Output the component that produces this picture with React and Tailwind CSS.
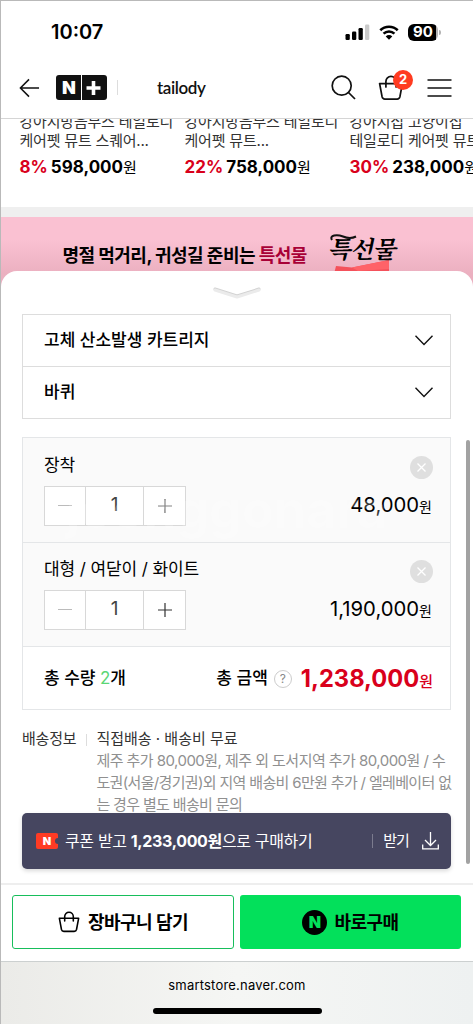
const products = [
  { name: ["강아지방음부스 테일로디", "케어펫 뮤트 스퀘어..."], rate: "8%", price: "598,000" },
  { name: ["강아지방음부스 테일로디", "케어펫 뮤트..."], rate: "22%", price: "758,000" },
  { name: ["강아지집 고양이집", "테일로디 케어펫 뮤트"], rate: "30%", price: "238,000" },
]

const options = ["고체 산소발생 카트리지", "바퀴"]

const items = [
  { name: "장착", count: 1, price: "48,000" },
  { name: "대형 / 여닫이 / 화이트", count: 1, price: "1,190,000" },
]

function StatusBar() {
  return (
    <div className="flex h-[57px] shrink-0 items-center justify-between pt-[5px] pr-[32px] pl-[50px]">
      <span className="text-[20px] leading-6 font-semibold">10:07</span>
      <div className="flex items-center">
        <svg width="25" height="16" viewBox="0 0 25 16">
          <rect x="0.5" y="10" width="4.3" height="6" rx="1.2" />
          <rect x="7" y="7.5" width="4.3" height="8.5" rx="1.2" />
          <rect x="13.5" y="4" width="4.3" height="12" rx="1.2" />
          <rect x="20" y="0.5" width="4.3" height="15.5" rx="1.2" fill="#cacaca" />
        </svg>
        <svg className="ml-[9px]" width="20" height="15" viewBox="0 0 21 16" fill="none" stroke="#000" strokeWidth="2.7">
          <path d="M1.2 5.6a13.2 13.2 0 0 1 18.6 0" />
          <path d="M4.7 9.3a8.3 8.3 0 0 1 11.6 0" />
          <path d="M7 12.2a5 5 0 0 1 7 0L10.500 15.700Z" fill="#000" stroke="none" />
        </svg>
        <div className="ml-[9px] flex h-[17px] w-[30px] items-center justify-center rounded-[6px] bg-linear-to-r from-black from-93% to-[#b3b3b3] to-93% text-[15px] font-bold text-white">
          90
        </div>
        <span className="ml-px h-[5px] w-[2px] rounded-r-full bg-[#b3b3b3]" />
      </div>
    </div>
  )
}

function Bag({ size, strokeWidth }) {
  return (
    <svg width={size} height={size} viewBox="0 0 24 24" fill="none" stroke="currentColor" strokeWidth={strokeWidth} strokeLinejoin="round" strokeLinecap="round">
      <path d="M1.500 8h21l-2.300 12.200a2.600 2.600 0 0 1-2.500 2H6.300a2.600 2.600 0 0 1-2.500-2Z" />
      <path d="M7.300 11V6a4.700 4.700 0 0 1 9.400 0v5" />
    </svg>
  )
}

function Header() {
  return (
    <header className="flex h-[61px] shrink-0 items-center border-b border-[#d5d5d5] pr-[21px] pb-px pl-[18px]">
      <svg width="21" height="20" viewBox="0 0 22 20" fill="none" stroke="#111" strokeWidth="1.6">
        <path d="M10.500 1 1.500 10l9 9M1.500 10H21" />
      </svg>
      <div className="ml-[16px] flex h-[25px] w-[51px] overflow-hidden rounded-[3px] bg-[#111] text-white">
        <span className="flex w-[26px] items-center justify-center border-r border-white pl-px text-[18px] font-black">N</span>
        <svg className="ml-[4px] mt-[6px]" width="15" height="14" viewBox="0 0 15 14" fill="none" stroke="#fff" strokeWidth="3.6">
          <path d="M0.500 7h14M7.500 0v14" />
        </svg>
      </div>
      <span className="ml-[10px] h-[15px] w-px bg-[#ddd]" />
      <span className="ml-[39px] font-['Lato'] text-[17px] leading-6 font-semibold tracking-[-0.4px] text-[#111]">tailody</span>
      <div className="ml-auto flex items-center text-[#111]">
        <svg width="25" height="25" viewBox="0 0 25 25" fill="none" stroke="currentColor" strokeWidth="1.7">
          <circle cx="10.700" cy="10.700" r="9.500" />
          <path d="m17.500 17.500 6.500 6.500" />
        </svg>
        <div className="relative ml-[22px]">
          <Bag size={26} strokeWidth={1.6} />
          <span className="absolute -top-[5px] left-[15px] flex size-5 items-center justify-center rounded-full bg-[#ff3b20] text-[13px] font-bold text-white">2</span>
        </div>
        <svg className="ml-[23px]" width="25" height="18" viewBox="0 0 25 18" stroke="currentColor" strokeWidth="1.6">
          <path d="M0.500 1h24M0.500 9h24M0.500 17h24" />
        </svg>
      </div>
    </header>
  )
}

function ProductList() {
  return (
    <div className="flex h-[88px] shrink-0 overflow-hidden pl-[18.500px]">
      {products.map((p) => (
        <div key={p.price} className="-mt-[7px] w-[165px] shrink-0 whitespace-nowrap">
          <p className="text-[15px] leading-[19px] tracking-[-0.2px] text-[#333]">
            {p.name[0]}
            <br />
            {p.name[1]}
          </p>
          <p className="mt-[5px] text-[17px] leading-6 font-bold">
            <span className="text-[#d9001b]">{p.rate}</span>
            <span className="ml-[3px]">{p.price}</span>
            <span className="text-[15px] font-normal">원</span>
          </p>
        </div>
      ))}
    </div>
  )
}

function Banner() {
  return (
    <div className="flex h-[76px] shrink-0 bg-linear-to-b from-[#fac1d2] from-30% to-[#ebb0c0] to-75% pt-[27px] pl-[61.500px]">
      <p className="text-[18px] leading-6 font-bold tracking-[-0.53px] whitespace-nowrap">
        명절 먹거리, 귀성길 준비는 <span className="text-[#a80036]">특선물</span>
      </p>
      <div className="relative -mt-[10px] ml-[23px] h-[60px] w-[70px]">
        <svg className="absolute top-[26px] left-[4px]" width="56" height="14" viewBox="0 0 56 14">
          <path d="M2 6 18 7.500 55 0v14H0Z" fill="#f4515b" />
          <path d="m18 7.500 37-7.500v9L24 11Z" fill="#ff6268" />
        </svg>
        <span className="absolute -top-px left-0 -skew-x-12 font-['Noto_Serif_CJK_KR','Noto_Sans_CJK_KR',serif] text-[24px] leading-[30px] font-bold tracking-[-0.8px] whitespace-nowrap">
          특선물
        </span>
        <svg className="absolute top-0 left-0" width="30" height="9" viewBox="0 0 30 9" fill="none" stroke="#111" strokeWidth="2">
          <path d="M2 6C-1 1 7 0 13 2.500s9 2 13 0" />
        </svg>
      </div>
    </div>
  )
}

function OptionSelect({ label }) {
  return (
    <button className="flex h-[52px] w-full items-center justify-between border-b border-[#ddd] pr-[17px] pl-[21px] text-[17px] font-medium last:h-[51px] last:border-b-0">
      {label}
      <svg width="18" height="11" viewBox="0 0 18 11" fill="none" stroke="#111" strokeWidth="1.4">
        <path d="m0.500 0.800 8.500 8.700 8.500-8.700" />
      </svg>
    </button>
  )
}

function Counter({ count, faded }) {
  return (
    <div className="flex h-10 w-[142px] border border-[#d8d8d8] bg-white">
      <span className="flex w-[41px] items-center justify-center border-r border-[#d8d8d8]">
        <span className="h-px w-[14px] bg-[#bbb]" />
      </span>
      <span className="flex flex-1 items-center justify-center text-[19px] text-[#444]">{count}</span>
      <span className="flex w-[42px] items-center justify-center border-l border-[#d8d8d8]">
        <svg width="14" height="14" viewBox="0 0 14 14" stroke={faded ? "#666" : "#333"} strokeWidth="1.2">
          <path d="M0 7h14M7 0v14" />
        </svg>
      </span>
    </div>
  )
}

function CartItem({ item, faded }) {
  return (
    <div className="h-[104px] border-b border-[#e4e6e8] bg-[#fafafa] pt-[14px] pr-[17px] pl-[21px] first:h-[105px] first:pt-[15px]">
      <div className="flex h-[26px] justify-between">
        <span className="text-[17px] leading-[25px] tracking-[-0.1px]">{item.name}</span>
        <span className="mt-[3px] flex size-[23px] items-center justify-center rounded-full bg-[#dfdfdf]">
          <svg width="9" height="9" viewBox="0 0 9 9" stroke="#fff" strokeWidth="1.3">
            <path d="m0.500 0.500 8 8M8.500 0.500l-8 8" />
          </svg>
        </span>
      </div>
      <div className="mt-[5px] flex items-center justify-between pr-px">
        <Counter count={item.count} faded={faded} />
        <span className="text-[20.300px] leading-[41px]">
          {item.price}
          <span className="text-[14px]">원</span>
        </span>
      </div>
    </div>
  )
}

function Cart() {
  return (
    <div className="relative mt-[18px] h-[273px] border border-[#e4e6e8]">
      {items.map((item, i) => (
        <CartItem key={item.name} item={item} faded={i === 0} />
      ))}
      <div className="flex h-[62px] items-center pt-px pr-[17px] pl-[21px]">
        <span className="text-[17px] font-medium">
          총 수량 <span className="font-normal text-[#5bd675]">2</span>개
        </span>
        <span className="ml-auto text-[17px] font-medium">총 금액</span>
        <span className="ml-[6px] flex size-[18px] items-center justify-center rounded-full border border-[#ccc] text-[12px] text-[#888]">?</span>
        <span className="ml-[9px] text-[23.700px] font-bold text-[#d9001b]">
          1,238,000<span className="text-[15px] font-medium">원</span>
        </span>
      </div>
      <span className="absolute top-[42px] left-[43px] text-[52px] leading-[60px] font-bold text-white/20">joonggonara</span>
    </div>
  )
}

function Delivery() {
  return (
    <div className="mt-[18px] flex h-[85px] text-[15px] leading-[22px] whitespace-nowrap text-[#333]">
      <span className="tracking-[-0.2px]">배송정보</span>
      <span className="mt-[6px] ml-[10px] h-3 w-px shrink-0 bg-[#ddd]" />
      <div className="ml-[9px]">
        <p>직접배송 · 배송비 무료</p>
        <p className="tracking-[-0.54px] text-[#909090]">
          제주 추가 80,000원, 제주 외 도서지역 추가 80,000원 / 수
          <br />
          <span className="tracking-[-0.66px]">도권(서울/경기권)외 지역 배송비 6만원 추가 / 엘레베이터 없</span>
          <br />
          <span className="tracking-[-0.66px]">는 경우 별도 배송비 문의</span>
        </p>
      </div>
    </div>
  )
}

function CouponBar() {
  return (
    <div className="flex h-14 items-center rounded-[5px] bg-[#464660] pr-[12px] pl-[14px] text-[16px] whitespace-nowrap text-white shadow-[0_2px_4px_rgba(0,0,0,0.15)]">
      <div className="relative flex h-4 w-[22px] items-center justify-center overflow-hidden rounded-[2px] bg-[#ff3b24] text-[11px] font-black">
        N
        <span className="absolute top-[5px] -right-[3px] size-[6px] rounded-full bg-[#464660]" />
      </div>
      <span className="ml-[7px] tracking-[-0.35px]">
        쿠폰 받고 <b className="font-bold">1,233,000원</b>으로 구매하기
      </span>
      <span className="ml-auto h-[14px] w-px bg-[#7b7b8e]" />
      <span className="ml-[10px] text-[15px] tracking-[-0.9px]">받기</span>
      <svg className="ml-[13px]" width="17" height="18" viewBox="0 0 17 18" fill="none" stroke="#fff" strokeWidth="1.3">
        <path d="M8.500 0v13M3 8l5.500 5.500L14 8M0.700 12.500v4.300h15.600v-4.300" />
      </svg>
    </div>
  )
}

function BuyButtons() {
  return (
    <div className="flex h-[78px] shrink-0 gap-[6px] border-t-2 border-[#eee] px-[11px] pt-[10px] text-[18px] font-bold tracking-[-0.5px]">
      <button className="flex h-[54px] w-[222px] items-center justify-center rounded-[3px] border border-[#17be5b]">
        <Bag size={22} strokeWidth={1.7} />
        <span className="ml-2">장바구니 담기</span>
      </button>
      <button className="flex h-[54px] w-[221px] items-center justify-center rounded-[3px] bg-[#03e05b]">
        <span className="flex size-[25px] items-center justify-center rounded-full bg-black text-[16px] font-black tracking-normal text-[#03e05b]">N</span>
        <span className="ml-[7px]">바로구매</span>
      </button>
    </div>
  )
}

function BottomSheet() {
  return (
    <section className="relative -mt-[22px] flex h-[690px] shrink-0 flex-col rounded-t-[16px] bg-white">
      <svg className="mx-auto mt-4 shrink-0" width="48" height="12" viewBox="0 0 48 12" fill="none" strokeLinecap="round" strokeLinejoin="round">
        <path d="M2 2 24 9 46 2" stroke="#d2d2d2" strokeWidth="3" />
        <path d="M2 3 24 10 46 3" stroke="#ebebeb" strokeWidth="3" />
      </svg>
      <div className="h-[584px] shrink-0 pt-[15px] pr-[22px] pl-[21px]">
        <div className="h-[105px] border border-[#ddd]">
          {options.map((label) => (
            <OptionSelect key={label} label={label} />
          ))}
        </div>
        <Cart />
        <Delivery />
        <CouponBar />
      </div>
      <BuyButtons />
      <span className="absolute top-[169px] right-[3px] h-[424px] w-[4px] rounded-full bg-[#a2a2a2]" />
    </section>
  )
}

function BrowserBar() {
  return (
    <div className="flex h-[63px] shrink-0 flex-col items-center border-t border-[#ccd0d0] bg-linear-to-r from-[#ebebe8] via-[#f5f6f4] to-[#eef1f1] pt-[14px]">
      <span className="text-[13px] leading-[18px] tracking-[0.2px]">smartstore.naver.com</span>
      <span className="mt-[14px] h-[6px] w-[169px] rounded-full bg-black" />
    </div>
  )
}

export default function App() {
  return (
    <div className="flex h-[1024px] w-[473px] flex-col overflow-hidden border-t border-l border-[#b9b9b9] bg-white font-['Inter','Noto_Sans_CJK_KR',sans-serif] text-black">
      <StatusBar />
      <Header />
      <ProductList />
      <div className="h-[10px] shrink-0 bg-[#efefef]" />
      <Banner />
      <BottomSheet />
      <BrowserBar />
    </div>
  )
}
